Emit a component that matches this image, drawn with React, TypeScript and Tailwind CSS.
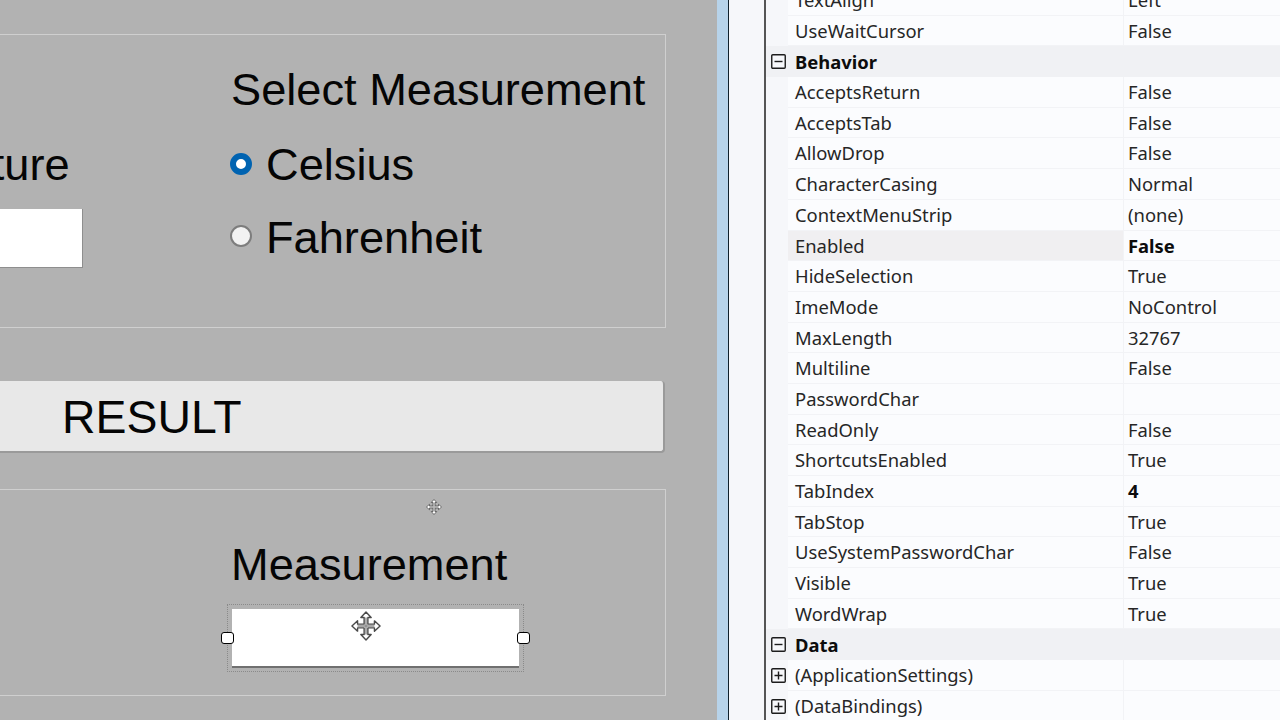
import React from "react";

type Row =
  | { kind: "cat"; name: string }
  | { kind: "prop"; name: string; value?: string; bold?: boolean; hot?: boolean; expand?: boolean };

const rows: Row[] = [
  { kind: "prop", name: "TextAlign", value: "Left" },
  { kind: "prop", name: "UseWaitCursor", value: "False" },
  { kind: "cat", name: "Behavior" },
  { kind: "prop", name: "AcceptsReturn", value: "False" },
  { kind: "prop", name: "AcceptsTab", value: "False" },
  { kind: "prop", name: "AllowDrop", value: "False" },
  { kind: "prop", name: "CharacterCasing", value: "Normal" },
  { kind: "prop", name: "ContextMenuStrip", value: "(none)" },
  { kind: "prop", name: "Enabled", value: "False", bold: true, hot: true },
  { kind: "prop", name: "HideSelection", value: "True" },
  { kind: "prop", name: "ImeMode", value: "NoControl" },
  { kind: "prop", name: "MaxLength", value: "32767" },
  { kind: "prop", name: "Multiline", value: "False" },
  { kind: "prop", name: "PasswordChar", value: "" },
  { kind: "prop", name: "ReadOnly", value: "False" },
  { kind: "prop", name: "ShortcutsEnabled", value: "True" },
  { kind: "prop", name: "TabIndex", value: "4", bold: true },
  { kind: "prop", name: "TabStop", value: "True" },
  { kind: "prop", name: "UseSystemPasswordChar", value: "False" },
  { kind: "prop", name: "Visible", value: "True" },
  { kind: "prop", name: "WordWrap", value: "True" },
  { kind: "cat", name: "Data" },
  { kind: "prop", name: "(ApplicationSettings)", value: "", expand: true },
  { kind: "prop", name: "(DataBindings)", value: "", expand: true },
];

function ToggleBox({ plus }: { plus?: boolean }) {
  return (
    <svg width="15" height="15" viewBox="0 0 15 15" className="shrink-0">
      <rect x="0.75" y="0.75" width="13.5" height="13.5" rx="1" fill="#f6f7fa" stroke="#1c1c1c" strokeWidth="1.4" />
      <path d={plus ? "M3.5 7.5h8M7.5 3.5v8" : "M3.5 7.5h8"} stroke="#1c1c1c" strokeWidth="1.4" />
    </svg>
  );
}

function MoveCursor({ size, className }: { size: number; className: string }) {
  return (
    <svg width={size} height={size} viewBox="0 0 32 32" className={className}>
      <path
        d="M16 1l5.5 6H18v7h7v-3.5l6 5.5-6 5.5V18h-7v7h3.5L16 31l-5.5-6H14v-7H7v3.5L1 16l6-5.5V14h7V7h-3.5z"
        fill="#fff"
        stroke="#4a4a4a"
        strokeWidth="1.5"
        strokeLinejoin="round"
      />
      <path d="M16 7v18M7 16h18" stroke="#8a8a8a" strokeWidth="1.5" />
    </svg>
  );
}

function Handle({ className }: { className: string }) {
  return (
    <div className={`absolute h-[12px] w-[13px] rounded-[3px] border-[1.5px] border-black bg-white ${className}`} />
  );
}

function PropertyRow({ row }: { row: Row }) {
  if (row.kind === "cat") {
    return (
      <div className="flex h-[30.7px] items-center bg-[#f0f1f4] font-bold text-[#0c0c0c]">
        <div className="flex w-[22px] shrink-0 pl-[5px]">
          <ToggleBox />
        </div>
        <span className="ml-[7px]">{row.name}</span>
      </div>
    );
  }
  return (
    <div className="flex h-[30.7px]">
      <div className="flex w-[22px] shrink-0 items-center pl-[5px]">{row.expand && <ToggleBox plus />}</div>
      <div
        className={`flex w-[335px] shrink-0 items-center border-b border-[#f2f3f6] pl-[7px] ${row.hot ? "bg-[#f0eff1]" : "bg-[#fbfcfe]"}`}
      >
        <span className="text-[#262626]">{row.name}</span>
      </div>
      <div className="flex flex-1 items-center border-b border-l border-[#f2f3f6] bg-[#fbfcfe] pl-[4px]">
        <span className={row.bold ? "font-bold text-[#0c0c0c]" : "text-[#262626]"}>{row.value}</span>
      </div>
    </div>
  );
}

export default function App() {
  return (
    <div className="flex h-[720px] w-[1280px] overflow-hidden bg-[#b2b2b2]">
      {/* designer surface */}
      <div className="w-[717px] shrink-0 font-['Liberation_Sans',Arial,sans-serif] text-[45.2px] leading-none text-[#050505]">
        <div className="relative ml-[-20px] mt-[34px] h-[294px] w-[686px] border border-[#cfcfcf]">
          <div className="absolute left-[250px] top-[32px] whitespace-nowrap">Select Measurement</div>
          <div className="absolute left-[-165px] top-[107px] w-[253px] whitespace-nowrap text-right">
            Temperature
          </div>
          <div className="absolute left-[-100px] top-[174px] h-[59px] w-[202px] border-b border-r border-[#8e8e8e] bg-white" />
          <div className="absolute left-[249px] top-[107px] flex items-center gap-[14px]">
            <span className="-mt-[2px] h-[22px] w-[22px] rounded-full border-[6px] border-[#0063b1] bg-white" />
            <span>Celsius</span>
          </div>
          <div className="absolute left-[249px] top-[180px] flex items-center gap-[14px]">
            <span className="-mt-[3px] h-[22px] w-[22px] rounded-full border-2 border-[#7d7d7d] bg-[#f2f2f2]" />
            <span>Fahrenheit</span>
          </div>
        </div>

        <div className="ml-[-20px] mt-[53px] flex h-[72px] w-[685px] items-center rounded-[4px] border-b-2 border-r-2 border-[#9a9a9a] bg-[#e8e8e8] pl-[82px] pt-[2px] text-[46.4px]">
          RESULT
        </div>

        <div className="relative ml-[-20px] mt-[36px] h-[207px] w-[686px] border border-[#cfcfcf]">
          <div className="absolute left-[250px] top-[52px] whitespace-nowrap">Measurement</div>
          <div className="absolute left-[246px] top-[114px] h-[68px] w-[297px] border border-dotted border-[#8a8a8a]" />
          <div className="absolute left-[251px] top-[119px] h-[59px] w-[287px] border-b-2 border-[#707070] bg-white" />
          <Handle className="left-[240px] top-[142px]" />
          <Handle className="left-[536px] top-[142px]" />
          <MoveCursor size={30} className="absolute left-[370px] top-[121px]" />
          <MoveCursor size={16} className="absolute left-[445px] top-[9px]" />
        </div>
      </div>

      {/* window edge */}
      <div className="w-[11px] shrink-0 bg-[#b7d3ea]" />
      <div className="w-[1px] shrink-0 bg-[#10202c]" />

      {/* property grid */}
      <div className="flex flex-1 bg-[#f6f7fa]">
        <div className="w-[35px] shrink-0" />
        <div className="w-[2px] shrink-0 bg-[#555]" />
        <div className="-mt-[15px] min-w-0 flex-1 font-['Noto_Sans',sans-serif] text-[18.4px]">
          {rows.map((r) => (
            <PropertyRow key={r.name} row={r} />
          ))}
        </div>
      </div>
    </div>
  );
}
